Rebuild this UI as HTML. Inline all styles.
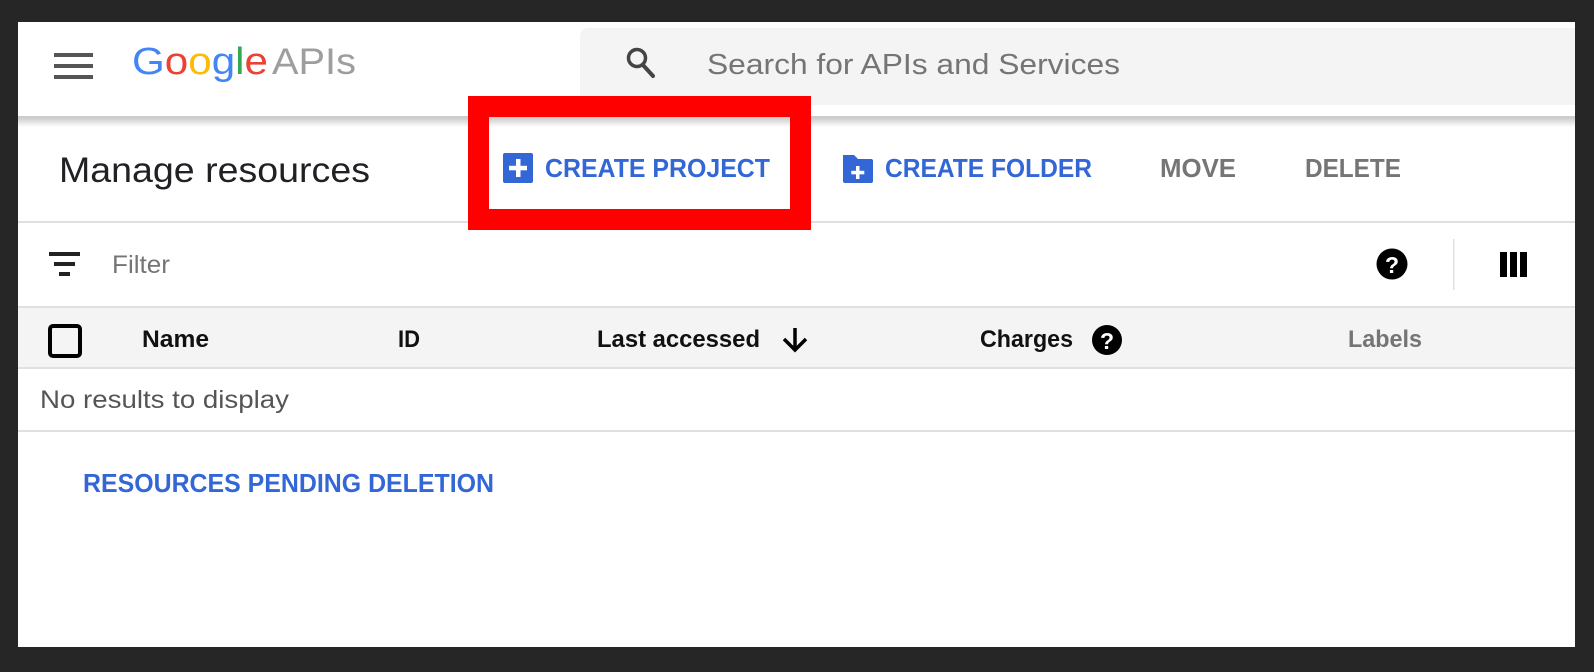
<!DOCTYPE html>
<html><head><meta charset="utf-8"><style>
html,body{margin:0;padding:0;background:#262626;width:1594px;height:672px;overflow:hidden}
svg{display:block}
text{font-family:"Liberation Sans",Arial,sans-serif}
</style></head><body>
<svg width="1594" height="672" viewBox="0 0 1594 672" xmlns="http://www.w3.org/2000/svg">
<defs>
<linearGradient id="sh" x1="0" y1="0" x2="0" y2="1"><stop offset="0" stop-color="#000" stop-opacity="0.22"/><stop offset="1" stop-color="#000" stop-opacity="0"/></linearGradient>
</defs>
<rect x="0" y="0" width="1594" height="672" fill="#262626"/>
<rect x="18" y="22" width="1557" height="625" fill="#fff"/>
<!-- header -->
<rect x="54" y="53" width="39" height="4" fill="#555"/>
<rect x="54" y="64" width="39" height="4" fill="#555"/>
<rect x="54" y="75" width="39" height="4" fill="#555"/>
<text x="132" y="74" font-size="38" textLength="136" lengthAdjust="spacingAndGlyphs"><tspan fill="#4285f4">G</tspan><tspan fill="#ea4335">o</tspan><tspan fill="#fbbc05">o</tspan><tspan fill="#4285f4">g</tspan><tspan fill="#34a853">l</tspan><tspan fill="#ea4335">e</tspan></text>
<text x="272" y="74" font-size="37" fill="#9e9e9e" textLength="84" lengthAdjust="spacingAndGlyphs">APIs</text>
<rect x="580" y="28" width="995" height="77" rx="8" fill="#f4f4f4"/>
<rect x="588" y="28" width="987" height="77" fill="#f4f4f4"/>
<circle cx="637" cy="58" r="8.5" fill="none" stroke="#444" stroke-width="3.5"/>
<line x1="643" y1="65" x2="653" y2="76" stroke="#444" stroke-width="4" stroke-linecap="round"/>
<text x="707" y="74" font-size="29" fill="#757575" textLength="413" lengthAdjust="spacingAndGlyphs">Search for APIs and Services</text>
<rect x="18" y="117" width="1557" height="10" fill="url(#sh)"/>
<rect x="18" y="116" width="1557" height="1.5" fill="#ccc"/>
<!-- toolbar -->
<text x="59" y="182" font-size="35" fill="#202124" textLength="311" lengthAdjust="spacingAndGlyphs">Manage resources</text>
<rect x="503" y="153" width="30" height="30" rx="2" fill="#3367d6"/>
<rect x="516" y="159" width="4.5" height="18" fill="#fff"/>
<rect x="509" y="165.8" width="18" height="4.5" fill="#fff"/>
<text x="545" y="177" font-size="26" font-weight="bold" fill="#3367d6" textLength="225" lengthAdjust="spacingAndGlyphs">CREATE PROJECT</text>
<path d="M843 155 h11 l4 4 h13 a2 2 0 0 1 2 2 v20 a2 2 0 0 1 -2 2 h-26 a2 2 0 0 1 -2 -2 z" fill="#3367d6"/>
<rect x="856" y="166" width="3.5" height="13" fill="#fff"/>
<rect x="851.3" y="170.8" width="13" height="3.5" fill="#fff"/>
<text x="885" y="177" font-size="26" font-weight="bold" fill="#3367d6" textLength="207" lengthAdjust="spacingAndGlyphs">CREATE FOLDER</text>
<text x="1160" y="177" font-size="26" font-weight="bold" fill="#757575" textLength="76" lengthAdjust="spacingAndGlyphs">MOVE</text>
<text x="1305" y="177" font-size="26" font-weight="bold" fill="#757575" textLength="96" lengthAdjust="spacingAndGlyphs">DELETE</text>
<rect x="18" y="221" width="1557" height="2" fill="#e0e0e0"/>
<!-- red box -->
<rect x="478.5" y="106.5" width="322" height="113" fill="none" stroke="#ff0000" stroke-width="21"/>
<!-- filter row -->
<rect x="49" y="252" width="31" height="4" fill="#222"/>
<rect x="54" y="262" width="21" height="4" fill="#222"/>
<rect x="59" y="272" width="11" height="4" fill="#222"/>
<text x="112" y="273" font-size="25" fill="#757575" textLength="58" lengthAdjust="spacingAndGlyphs">Filter</text>
<ellipse cx="1392" cy="264" rx="15.5" ry="15.5" fill="#000"/>
<text x="1392" y="273" font-size="23" font-weight="bold" fill="#fff" text-anchor="middle">?</text>
<rect x="1453" y="239" width="1.5" height="51" fill="#e0e0e0"/>
<rect x="1500" y="252" width="7" height="25" fill="#000"/>
<rect x="1510" y="252" width="7" height="25" fill="#000"/>
<rect x="1520" y="252" width="7" height="25" fill="#000"/>
<!-- table header -->
<rect x="18" y="307" width="1557" height="61" fill="#f4f4f4"/>
<rect x="18" y="306" width="1557" height="2" fill="#e0e0e0"/>
<rect x="18" y="367" width="1557" height="2" fill="#e0e0e0"/>
<rect x="50" y="326" width="30" height="30" rx="3" fill="none" stroke="#000" stroke-width="4"/>
<text x="142" y="347" font-size="24" font-weight="bold" fill="#111" textLength="67" lengthAdjust="spacingAndGlyphs">Name</text>
<text x="398" y="347" font-size="24" font-weight="bold" fill="#111" textLength="22" lengthAdjust="spacingAndGlyphs">ID</text>
<text x="597" y="347" font-size="24" font-weight="bold" fill="#111" textLength="163" lengthAdjust="spacingAndGlyphs">Last accessed</text>
<line x1="795" y1="328" x2="795" y2="350" stroke="#000" stroke-width="3.5"/>
<path d="M784 339 L795 350 L806 339" fill="none" stroke="#000" stroke-width="3.5"/>
<text x="980" y="347" font-size="24" font-weight="bold" fill="#111" textLength="93" lengthAdjust="spacingAndGlyphs">Charges</text>
<circle cx="1107" cy="340" r="15" fill="#000"/>
<text x="1107" y="349" font-size="23" font-weight="bold" fill="#fff" text-anchor="middle">?</text>
<text x="1348" y="347" font-size="24" font-weight="bold" fill="#757575" textLength="74" lengthAdjust="spacingAndGlyphs">Labels</text>
<!-- row -->
<text x="40" y="408" font-size="25" fill="#555" textLength="249" lengthAdjust="spacingAndGlyphs">No results to display</text>
<rect x="18" y="430" width="1557" height="2" fill="#e0e0e0"/>
<text x="83" y="492" font-size="26" font-weight="bold" fill="#3367d6" textLength="411" lengthAdjust="spacingAndGlyphs">RESOURCES PENDING DELETION</text>
</svg>
</body></html>
